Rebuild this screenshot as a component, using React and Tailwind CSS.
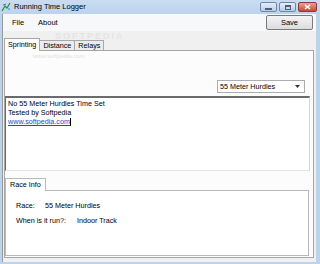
import React from 'react';

const WinButton = ({ kind }) => {
  if (kind === 'close') {
    return (
      <div className="w-[19px] h-[10px] rounded-[2px] border border-[#8c3a33] bg-gradient-to-b from-[#e7a195] to-[#c4473b] flex items-center justify-center">
        <svg width="7" height="6" viewBox="0 0 7 6">
          <path d="M1 1 L6 5 M6 1 L1 5" stroke="#ffffff" strokeWidth="1.6" />
        </svg>
      </div>
    );
  }
  return (
    <div className="w-[17px] h-[10px] rounded-[2px] border border-[#6f86a6] bg-gradient-to-b from-[#e6eef8] to-[#b9cde6] flex items-center justify-center">
      {kind === 'min' ? (
        <div className="w-[7px] h-[2px] bg-[#4f5f75] mt-[3px]" />
      ) : (
        <div className="w-[6px] h-[5px] border border-[#4f5f75] border-t-2" />
      )}
    </div>
  );
};

const App = () => {
  return (
    <div className="w-[320px] h-[264px] bg-[#bcd3ee] flex flex-col overflow-hidden font-['Liberation_Sans',Arial,sans-serif] text-black">
      {/* Title bar */}
      <div className="h-[14px] flex items-center pl-[1px] pr-[3px] bg-gradient-to-b from-[#c9dcf2] to-[#bcd3ee]">
        <svg width="10" height="10" viewBox="0 0 10 10">
          <path d="M1 9 L4 4 L6 6 L9 1" stroke="#2e8b3a" strokeWidth="1.2" fill="none" />
          <path d="M2 3 L5 2" stroke="#3f6fd0" strokeWidth="1" />
          <circle cx="8" cy="7" r="1" fill="#3fb2e0" />
        </svg>
        <span className="ml-[3px] text-[7.5px] leading-none">Running Time Logger</span>
        <div className="ml-auto flex items-center gap-[2px]">
          <WinButton kind="min" />
          <WinButton kind="max" />
          <WinButton kind="close" />
        </div>
      </div>

      {/* Client area */}
      <div className="flex-1 flex flex-col ml-[2px] mr-[4px] mb-[2px] bg-[#f0f0f0] border-l border-[#9a9a9a] relative">
        {/* Menu bar */}
        <div className="h-[17px] flex items-center bg-[#f7f8f9] text-[7.5px]">
          <span className="ml-[9px]">File</span>
          <span className="ml-[14px]">About</span>
          <button className="ml-auto mr-[3px] w-[47px] h-[15px] rounded-[2px] border border-[#7a7a7a] bg-gradient-to-b from-[#f4f4f4] to-[#dcdcdc] text-[7.5px] leading-none">
            Save
          </button>
        </div>

        {/* Watermark */}
        <div className="absolute left-[52px] top-[16px] text-[9px] tracking-[2px] text-[#e4e4e4] font-bold pointer-events-none">SOFTPEDIA</div>

        {/* Main tabs */}
        <div className="flex-1 flex flex-col pt-[6px] ml-[1px] mr-[2px] mb-[4px]">
          <div className="flex items-end h-[13px] text-[7.2px] leading-none">
            <div className="h-[13px] px-[3px] flex items-center bg-[#fcfcfc] border-x border-t border-[#a7a7a7] -mb-px relative z-10">
              Sprinting
            </div>
            <div className="h-[10px] px-[3px] flex items-center bg-[#ececec] border-r border-t border-[#a7a7a7]">
              Distance
            </div>
            <div className="h-[10px] px-[3px] flex items-center bg-[#ececec] border-r border-t border-[#a7a7a7]">
              Relays
            </div>
          </div>

          <div className="flex-1 flex flex-col bg-[#fcfcfc] border border-[#a7a7a7] relative">
            <div className="absolute left-[28px] top-[1px] text-[6px] text-[#e2e2e2] pointer-events-none">www.softpedia.com</div>

            {/* Dropdown */}
            <div className="flex justify-end pr-[8px] mt-[29px]">
              <div className="w-[88px] h-[13px] border border-[#abadb3] bg-white flex items-center pl-[2px] pr-[4px] text-[7.2px] leading-none">
                <span>55 Meter Hurdles</span>
                <svg className="ml-auto" width="5" height="3" viewBox="0 0 5 3">
                  <path d="M0 0 L5 0 L2.5 3 Z" fill="#333333" />
                </svg>
              </div>
            </div>

            {/* Text area */}
            <div className="mt-[3px] mr-[3px] h-[75px] border-t-2 border-l border-[#6b6b6b] border-r border-r-[#d6d6d6] border-b border-b-[#e4e4e4] bg-white pl-[2px] pt-[1px] text-[7.2px] leading-[9px]">
              <div>No 55 Meter Hurdles Time Set</div>
              <div>Tested by Softpedia</div>
              <div>
                <span className="text-[#2a46c8] underline">www.softpedia.com</span>
                <span className="inline-block w-px h-[8px] bg-black align-middle" />
              </div>
            </div>

            {/* Race Info tab */}
            <div className="mt-[7px] mr-[4px] mb-[1px] flex-1 flex flex-col">
              <div className="flex">
                <div className="h-[13px] w-[41px] pl-[4px] flex items-center bg-white border-x border-t border-[#b9b9b9] -mb-px relative z-10 text-[7.2px] leading-none">
                  Race Info
                </div>
              </div>
              <div className="flex-1 bg-white border border-[#b9b9b9] pt-[11px] pl-[10px] text-[7.2px] leading-none">
                <div className="flex items-center h-[8px]">
                  <span className="w-[29px]">Race:</span>
                  <span>55 Meter Hurdles</span>
                </div>
                <div className="flex items-center h-[8px] mt-[7px]">
                  <span className="w-[61px]">When is it run?:</span>
                  <span>Indoor Track</span>
                </div>
              </div>
            </div>
          </div>
        </div>
      </div>
    </div>
  );
};

export default App;
